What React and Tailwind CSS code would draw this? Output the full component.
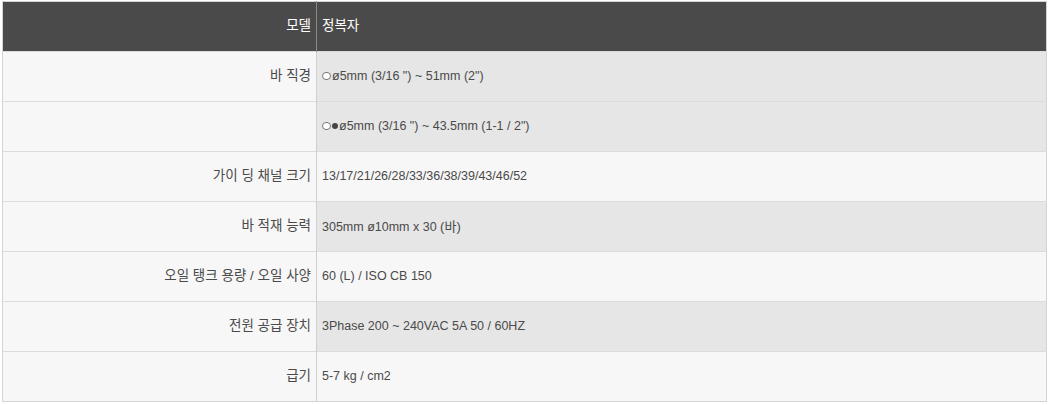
import React from 'react'

const Open = () => <span className='inline-block w-[9px] h-[8px] rounded-full border border-[#777] bg-white align-[-0px] mr-[1px]'></span>
const Filled = () => <span className='inline-block w-[6px] h-[6px] rounded-full bg-[#444] align-[1px] mr-[1px]'></span>

const rows = [
  { label: '바 직경', value: <><Open />ø5mm (3/16 ") ~ 51mm (2")</>, shade: true },
  { label: '', value: <><Open /><Filled />ø5mm (3/16 ") ~ 43.5mm (1-1 / 2")</>, shade: true },
  { label: '가이 딩 채널 크기', value: '13/17/21/26/28/33/36/38/39/43/46/52', shade: false },
  { label: '바 적재 능력', value: <>305mm ø10mm x 30 <span className='text-[13px]'>(바)</span></>, shade: true },
  { label: '오일 탱크 용량 / 오일 사양', value: '60 (L) / ISO CB 150', shade: false },
  { label: '전원 공급 장치', value: '3Phase 200 ~ 240VAC 5A 50 / 60HZ', shade: true },
  { label: '급기', value: '5-7 kg / cm2', shade: false },
]

const App = () => {
  return (
    <div className='w-[1050px] h-[405px] bg-white pl-[2px] pt-[1px] font-["Liberation_Sans","Noto_Sans_CJK_KR",sans-serif]'>
      <table className='w-[1045px] border-collapse border border-[#d4d4d4]'>
        <thead>
          <tr className='h-[50px] bg-[#4a4a4a] text-white text-[13.5px]'>
            <th className='w-[314px] text-right font-normal pr-[5px] border-r border-[#8a8a8a]'>모델</th>
            <th className='text-left font-normal pl-[5px]'>정복자</th>
          </tr>
        </thead>
        <tbody>
          {rows.map((row, i) => (
            <tr key={i} className='h-[50px] border-t border-[#dcdcdc] text-[#4a4a4a]'>
              <td className='w-[314px] text-right pr-[5px] bg-[#f7f7f7] border-r border-[#cfcfcf] text-[13.5px]'>{row.label}</td>
              <td className={`text-left pl-[5px] text-[12.5px] ${row.shade ? 'bg-[#e6e6e6]' : 'bg-[#f7f7f7]'}`}>{row.value}</td>
            </tr>
          ))}
        </tbody>
      </table>
    </div>
  )
}

export default App
